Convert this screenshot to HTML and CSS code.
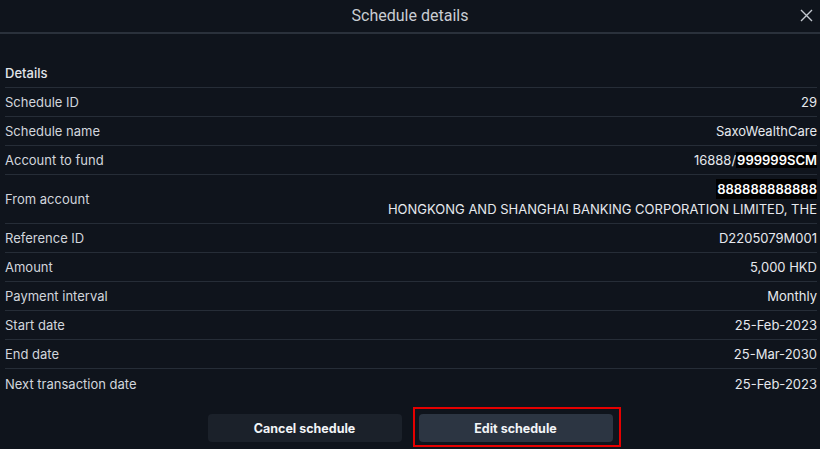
FILE: index.html
```html
<!DOCTYPE html>
<html lang="en">
<head>
<meta charset="utf-8">
<title>Schedule details</title>
<link rel="stylesheet" href="styles.css">
</head>
<body>
<div class="dialog">
  <header class="header">
    <h1 class="title">Schedule details</h1>
    <button class="close" aria-label="Close">
      <svg width="13" height="13" viewBox="0 0 13 13"><path d="M1 1L12 12M12 1L1 12" stroke="#c4c9d0" stroke-width="1.4" fill="none"/></svg>
    </button>
  </header>
  <main class="content">
    <div class="section-title">Details</div>
    <div class="row"><span class="label">Schedule ID</span><span class="value">29</span></div>
    <div class="row"><span class="label">Schedule name</span><span class="value">SaxoWealthCare</span></div>
    <div class="row"><span class="label">Account to fund</span><span class="value">16888/<span class="mask">999999SCM</span></span></div>
    <div class="row tall"><span class="label">From account</span><span class="value multi"><span class="mask">888888888888</span><span>HONGKONG AND SHANGHAI BANKING CORPORATION LIMITED, THE</span></span></div>
    <div class="row"><span class="label">Reference ID</span><span class="value">D2205079M001</span></div>
    <div class="row"><span class="label">Amount</span><span class="value">5,000 HKD</span></div>
    <div class="row"><span class="label">Payment interval</span><span class="value">Monthly</span></div>
    <div class="row"><span class="label">Start date</span><span class="value">25-Feb-2023</span></div>
    <div class="row"><span class="label">End date</span><span class="value">25-Mar-2030</span></div>
    <div class="row last"><span class="label">Next transaction date</span><span class="value">25-Feb-2023</span></div>
  </main>
  <footer class="actions">
    <button class="btn btn-cancel">Cancel schedule</button>
    <button class="btn btn-edit highlighted">Edit schedule</button>
  </footer>
</div>
</body>
</html>
```
FILE: styles.css
```css
* { box-sizing: border-box; }
html, body { margin: 0; padding: 0; }
body {
  background: #0f141c;
  width: 820px;
  height: 449px;
  overflow: hidden;
  font-family: Inter, "Noto Sans", sans-serif;
  color: #d9dde3;
}
.dialog { display: flex; flex-direction: column; height: 100%; }
.header {
  height: 34px;
  border-bottom: 2px solid #2a313b;
  display: flex;
  align-items: center;
  justify-content: center;
  position: relative;
}
.title {
  margin: 0 0 2px;
  font-family: Roboto, sans-serif;
  font-weight: 400;
  font-size: 16px;
  color: #c9cdd3;
}
.close {
  position: absolute;
  right: 6px;
  top: 8px;
  background: none;
  border: 0;
  padding: 0;
  width: 15px;
  height: 15px;
  display: flex;
  align-items: center;
  justify-content: center;
}
.content {
  padding: 24px 3px 0 5px;
}
.section-title {
  height: 30px;
  display: flex;
  align-items: center;
  font-family: Inter, sans-serif;
  font-weight: 500;
  font-size: 13px;
  color: #e2e5ea;
  border-bottom: 1px solid #262d37;
}
.row {
  height: 29px;
  display: flex;
  align-items: center;
  justify-content: space-between;
  border-bottom: 1px solid #262d37;
  font-size: 13px;
}
.row.tall { height: 49px; }
.row.last { border-bottom: 0; }
.label { color: #d2d6dc; }
.value { color: #e6e9ee; text-align: right; }
.value.multi { display: flex; flex-direction: column; align-items: flex-end; line-height: 20px; }
.mask { background: #000; color: #fff; font-weight: 600; padding: 0 0 0 1px; }
.actions {
  display: flex;
  justify-content: center;
  gap: 17px;
  padding-top: 16px;
}
.btn {
  width: 194px;
  height: 28px;
  border: 0;
  border-radius: 4px;
  font-family: Inter, sans-serif;
  font-weight: 700;
  font-size: 12.5px;
  color: #f2f4f7;
}
.btn-cancel { background: #1b212a; }
.btn-edit { background: #2c3542; }
.highlighted { position: relative; }
.highlighted::after {
  content: "";
  position: absolute;
  top: -7px;
  left: -6px;
  right: -8px;
  bottom: -5px;
  border: 2px solid #e50000;
}
```
